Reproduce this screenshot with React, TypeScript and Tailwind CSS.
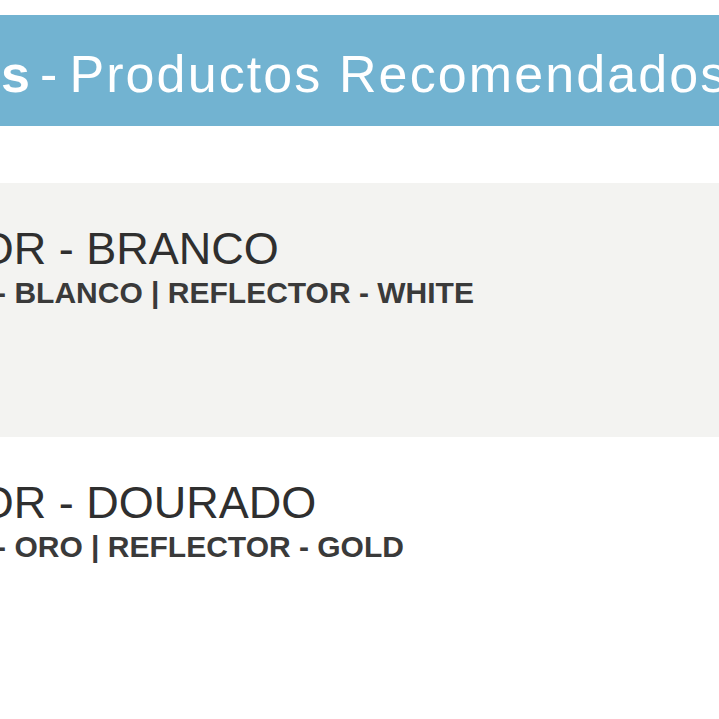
import React from 'react';

type Product = {
  id: number;
  name: string;
  translations: string;
};

const products: Product[] = [
  { id: 1, name: 'REFLETOR - BRANCO', translations: 'REFLECTOR - BLANCO | REFLECTOR - WHITE' },
  { id: 2, name: 'REFLETOR - DOURADO', translations: 'REFLECTOR - ORO | REFLECTOR - GOLD' },
];

export default function App() {
  return (
    <main className="w-[719px] h-[719px] overflow-hidden bg-white font-['Liberation_Sans',Arial,sans-serif]">
      <div className="h-[15px]" />

      {/* section header */}
      <div className="h-[111px] bg-[#72b3d1] flex items-center overflow-hidden">
        <div className="ml-[-642px] flex whitespace-nowrap text-[52px] leading-none text-white tracking-[2.1px] pt-[6px]">
          <span className="font-bold">Produtos Recomendados</span>
          <span className="ml-[8px]">-</span>
          <span className="ml-[10px]">Productos Recomendados</span>
        </div>
      </div>

      <div className="h-[57px]" />

      {/* product list */}
      <div className="flex flex-col">
        {products.map((p, i) => (
          <div
            key={p.id}
            className={`h-[254px] overflow-hidden pt-[43px] ${i % 2 === 0 ? 'bg-[#f3f3f1]' : 'bg-white'}`}
          >
            <div className="ml-[-193px] whitespace-nowrap">
              <h3 className="text-[45px] leading-none text-[#2f2f2f]">{p.name}</h3>
              <p className="mt-[7px] ml-[-2px] text-[30px] leading-none font-bold text-[#3a3a3a]">{p.translations}</p>
            </div>
          </div>
        ))}
      </div>
    </main>
  );
}
